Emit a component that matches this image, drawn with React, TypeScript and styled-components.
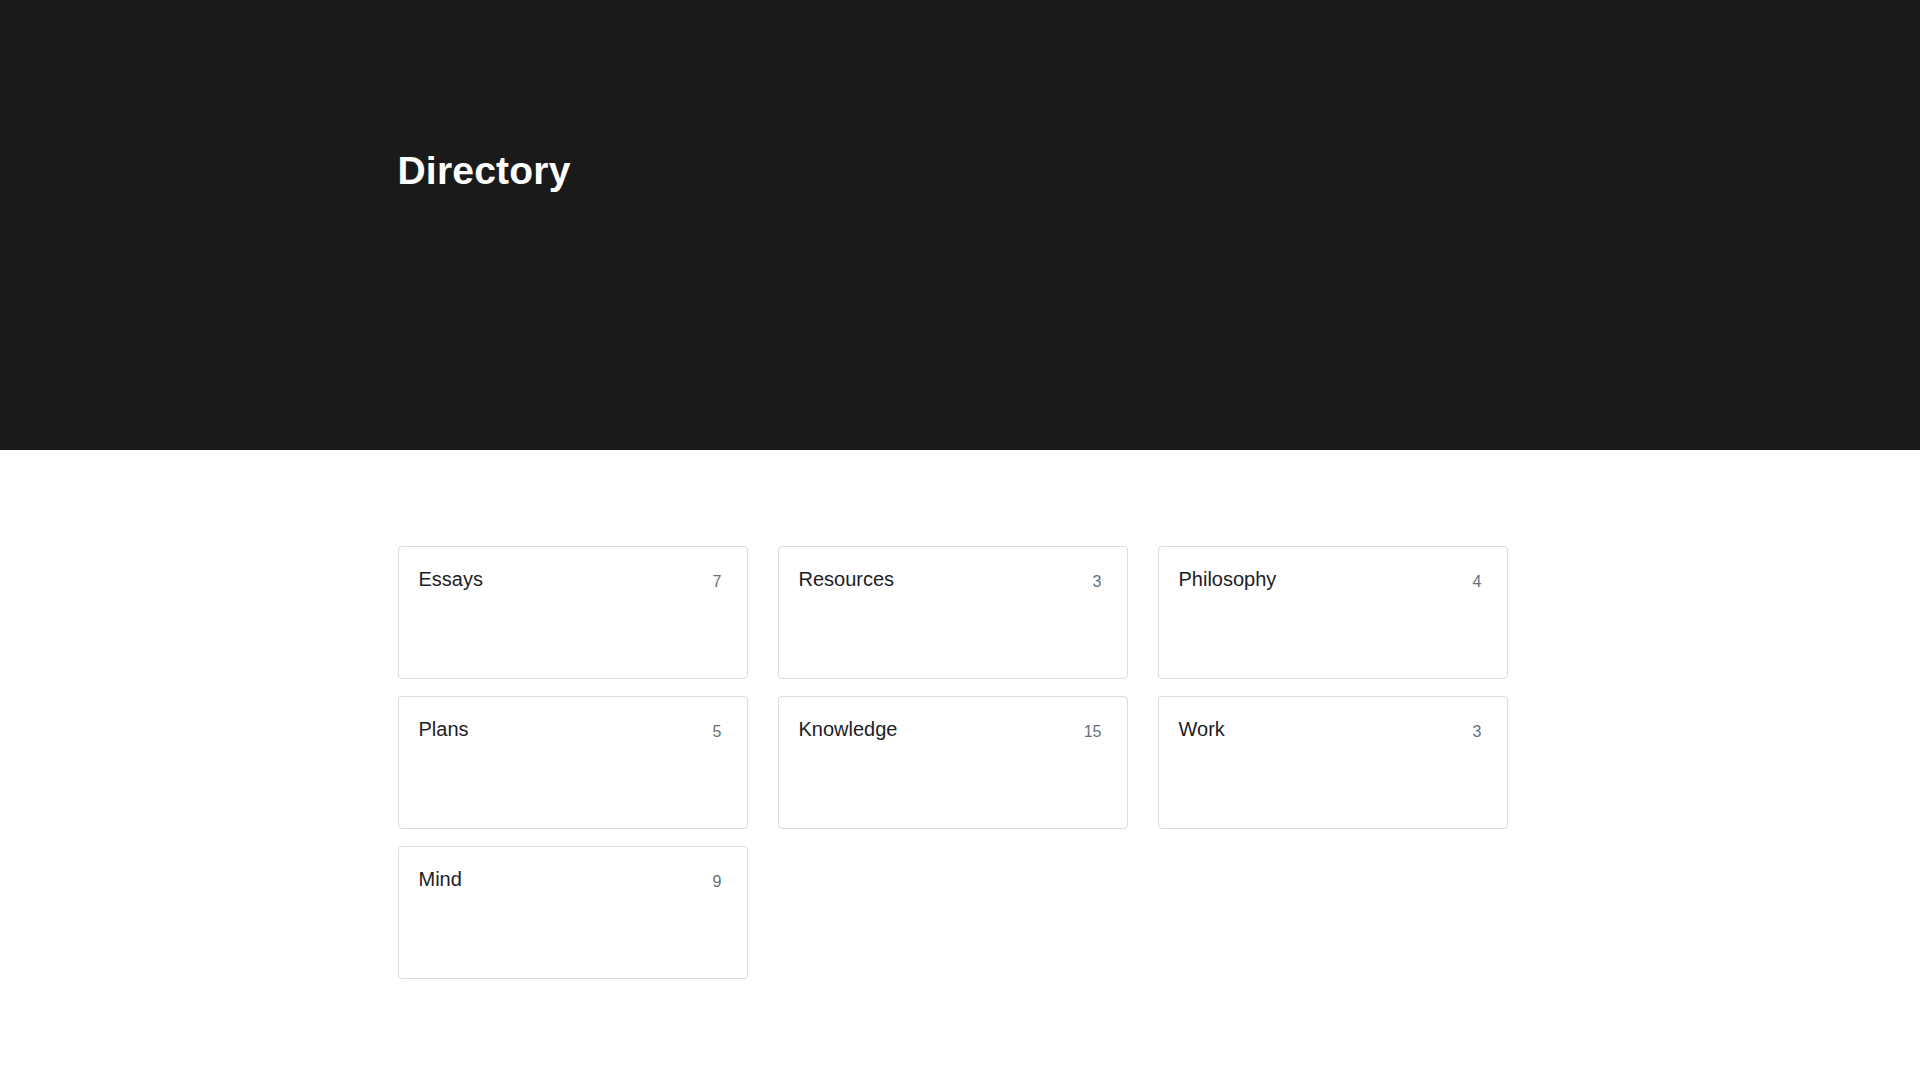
import styled, { createGlobalStyle } from 'styled-components'

const GlobalStyle = createGlobalStyle`
  body {
    margin: 0;
    background: #ffffff;
    font-family: "Liberation Sans", Arial, sans-serif;
    color: #212529;
  }
  * {
    box-sizing: border-box;
  }
`

// the reference is laid out next to a 15px scrollbar, so centre in 1905px
const Hero = styled.header`
  height: 450px;
  padding-right: 15px;
  background-color: #1a1a1a;
`

const Container = styled.div`
  width: 1110px;
  margin: 0 auto;
`

const Title = styled.h1`
  margin: 0;
  padding-top: 148px;
  font-size: 39px;
  font-weight: 700;
  line-height: 1.2;
  color: #ffffff;
  letter-spacing: 0.2px;
`

const Main = styled.main`
  padding: 96px 15px 100px 0;
`

const Grid = styled.div`
  display: grid;
  grid-template-columns: repeat(3, 350px);
  column-gap: 30px;
  row-gap: 17px;
`

const Card = styled.a`
  display: flex;
  justify-content: space-between;
  align-items: baseline;
  height: 133px;
  padding: 21px 25px 20px 20px;
  border: 1px solid #dcdcdc;
  border-radius: 4px;
  background: #ffffff;
  text-decoration: none;
  color: inherit;
`

const CardName = styled.span`
  font-size: 20px;
  line-height: 1.1;
  color: #1d1d1f;
`

const CardCount = styled.span`
  font-size: 16px;
  color: #66707a;
  position: relative;
  top: 1px;
`

const categories = [
  { name: 'Essays', count: 7 },
  { name: 'Resources', count: 3 },
  { name: 'Philosophy', count: 4 },
  { name: 'Plans', count: 5 },
  { name: 'Knowledge', count: 15 },
  { name: 'Work', count: 3 },
  { name: 'Mind', count: 9 },
]

function App() {
  return (
    <>
      <GlobalStyle />
      <Hero>
        <Container>
          <Title>Directory</Title>
        </Container>
      </Hero>
      <Main>
        <Container>
          <Grid>
            {categories.map((c) => (
              <Card key={c.name} href="#">
                <CardName>{c.name}</CardName>
                <CardCount>{c.count}</CardCount>
              </Card>
            ))}
          </Grid>
        </Container>
      </Main>
    </>
  )
}

export default App
